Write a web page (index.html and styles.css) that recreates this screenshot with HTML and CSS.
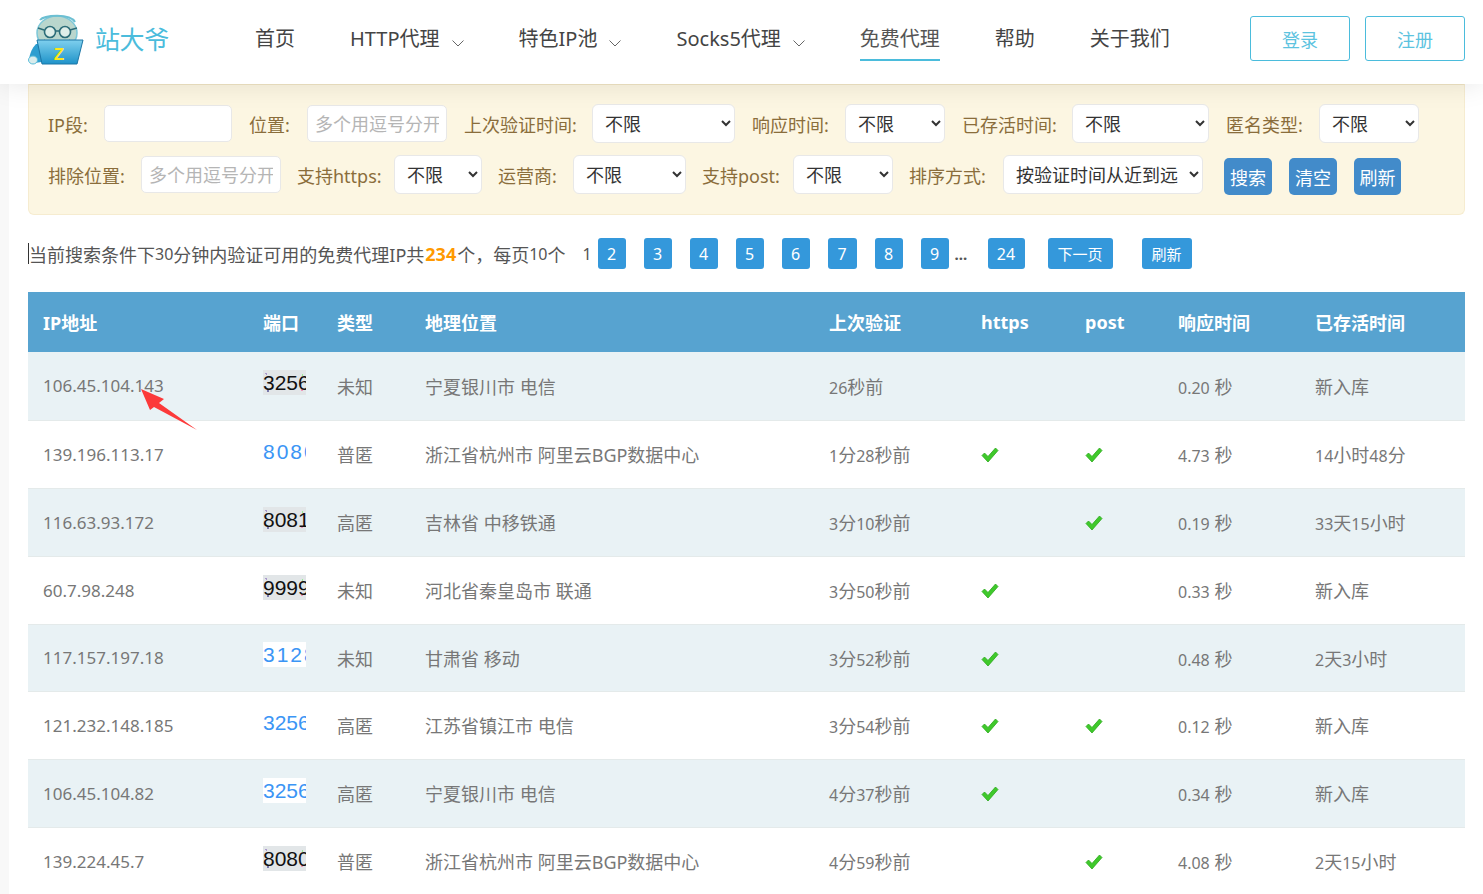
FILE: index.html
```html
<!DOCTYPE html>
<html lang="zh-CN">
<head>
<meta charset="utf-8">
<title>站大爷 免费代理</title>
<link rel="stylesheet" href="styles.css">
</head>
<body>
<header class="header">
  <a class="logo">
    <svg class="logo-mark" width="56" height="52" viewBox="0 0 56 52">
      <defs>
        <linearGradient id="lap" x1="0" y1="0" x2="0" y2="1"><stop offset="0" stop-color="#7fd0ee"/><stop offset="1" stop-color="#1f93c9"/></linearGradient>
      </defs>
      <path d="M8 31c-4 4-6 9-7 15l5 4 8-1 6-18z" fill="#2d9ed0"/>
      <ellipse cx="5" cy="47" rx="4.500" ry="4" fill="#d9ecec" stroke="#58bcd9" stroke-width="1"/>
      <ellipse cx="29" cy="20" rx="20" ry="17" fill="#b9d6cd" stroke="#7cc7d8" stroke-width="1.500"/>
      <path d="M12 7c4-5 30-7 35 2" fill="none" stroke="#6cbfd2" stroke-width="2"/>
      <circle cx="22" cy="19" r="5.500" fill="#dfeee9" stroke="#2c6c78" stroke-width="1.600"/>
      <circle cx="37" cy="19" r="5.500" fill="#dfeee9" stroke="#2c6c78" stroke-width="1.600"/>
      <path d="M27 18h5M16 17l-6-2M42 17l7-2" stroke="#2c6c78" stroke-width="1.400" fill="none"/>
      <path d="M16 27c5 7 20 7 26 0" fill="#fff" stroke="#2c6c78" stroke-width="1.400"/>
      <path d="M9 27h46l-6 24H14z" fill="url(#lap)" stroke="#1c76a6" stroke-width="1"/>
      <text class="logo-z" x="31" y="47" text-anchor="middle">Z</text>
    </svg>
    <span class="logo-text">站大爷</span>
  </a>
  <nav class="nav">
    <a class="nav-item">首页</a>
    <a class="nav-item">HTTP代理<svg class="caret" width="12" height="7" viewBox="0 0 12 7"><path d="M.5.500 6 6l5.500-5.500" fill="none" stroke="#666" stroke-width="1"/></svg></a>
    <a class="nav-item">特色IP池<svg class="caret" width="12" height="7" viewBox="0 0 12 7"><path d="M.5.500 6 6l5.500-5.500" fill="none" stroke="#666" stroke-width="1"/></svg></a>
    <a class="nav-item">Socks5代理<svg class="caret" width="12" height="7" viewBox="0 0 12 7"><path d="M.5.500 6 6l5.500-5.500" fill="none" stroke="#666" stroke-width="1"/></svg></a>
    <a class="nav-item active">免费代理</a>
    <a class="nav-item">帮助</a>
    <a class="nav-item">关于我们</a>
  </nav>
  <div class="auth">
    <a class="auth-btn">登录</a>
    <a class="auth-btn">注册</a>
  </div>
</header>

<main class="main">
  <section class="filter">
    <div class="row row-a">
      <label class="group"><span class="lb w56">IP段:</span><input class="ipt w128" type="text"></label>
      <label class="group"><span class="lb w58">位置:</span><input class="ipt w140" type="text" placeholder="多个用逗号分开"></label>
      <label class="group"><span class="lb w128">上次验证时间:</span><select class="sel w143"><option>不限</option></select></label>
      <label class="group"><span class="lb w93">响应时间:</span><select class="sel w100"><option>不限</option></select></label>
      <label class="group"><span class="lb w110">已存活时间:</span><select class="sel w137"><option>不限</option></select></label>
      <label class="group"><span class="lb w93">匿名类型:</span><select class="sel w100"><option>不限</option></select></label>
    </div>
    <div class="row row-b">
      <label class="group"><span class="lb w93">排除位置:</span><input class="ipt w140" type="text" placeholder="多个用逗号分开"></label>
      <label class="group"><span class="lb w97">支持https:</span><select class="sel w88"><option>不限</option></select></label>
      <label class="group"><span class="lb w75">运营商:</span><select class="sel w113"><option>不限</option></select></label>
      <label class="group"><span class="lb w91">支持post:</span><select class="sel w100"><option>不限</option></select></label>
      <label class="group"><span class="lb w94">排序方式:</span><select class="sel w200"><option>按验证时间从近到远</option></select></label>
      <div class="actions">
        <button class="act">搜索</button>
        <button class="act">清空</button>
        <button class="act narrow">刷新</button>
      </div>
    </div>
  </section>

  <div class="pager">
    <span class="summary">当前搜索条件下<span class="n">30</span>分钟内验证可用的免费代理IP共<b class="count">234</b>个，每页<span class="n">10</span>个</span>
    <span class="cur">1</span>
    <a class="pg">2</a><a class="pg">3</a><a class="pg">4</a><a class="pg">5</a><a class="pg">6</a><a class="pg wide">7</a><a class="pg">8</a><a class="pg">9</a>
    <span class="dots">...</span>
    <a class="pg w37">24</a>
    <a class="pg next">下一页</a>
    <a class="pg refresh">刷新</a>
  </div>

  <div class="table-wrap">
    <table class="tbl">
      <thead>
        <tr>
          <th class="c-ip">IP地址</th><th class="c-port">端口</th><th class="c-type">类型</th><th class="c-geo">地理位置</th><th class="c-last">上次验证</th><th class="c-https">https</th><th class="c-post">post</th><th class="c-resp">响应时间</th><th>已存活时间</th>
        </tr>
      </thead>
      <tbody>
        <tr><td class="ip">106.45.104.143</td><td><span class="cap dark">3256</span></td><td>未知</td><td>宁夏银川市 电信</td><td><span class="n">26</span>秒前</td><td></td><td></td><td><span class="n">0.20</span> 秒</td><td>新入库</td></tr>
        <tr><td class="ip">139.196.113.17</td><td><span class="cap blue plain spaced">8080</span></td><td>普匿</td><td>浙江省杭州市 阿里云BGP数据中心</td><td><span class="n">1</span>分<span class="n">28</span>秒前</td><td><svg class="ok" viewBox="0 0 18 16"><path d="M1 8.500 3.500 6 7 9.500 14.500 1 17 3.500 7 15z" fill="#3fc92b" stroke="#2ba81c" stroke-width=".8"/></svg></td><td><svg class="ok" viewBox="0 0 18 16"><path d="M1 8.500 3.500 6 7 9.500 14.500 1 17 3.500 7 15z" fill="#3fc92b" stroke="#2ba81c" stroke-width=".8"/></svg></td><td><span class="n">4.73</span> 秒</td><td><span class="n">14</span>小时<span class="n">48</span>分</td></tr>
        <tr><td class="ip">116.63.93.172</td><td><span class="cap dark">8081</span></td><td>高匿</td><td>吉林省 中移铁通</td><td><span class="n">3</span>分<span class="n">10</span>秒前</td><td></td><td><svg class="ok" viewBox="0 0 18 16"><path d="M1 8.500 3.500 6 7 9.500 14.500 1 17 3.500 7 15z" fill="#3fc92b" stroke="#2ba81c" stroke-width=".8"/></svg></td><td><span class="n">0.19</span> 秒</td><td><span class="n">33</span>天<span class="n">15</span>小时</td></tr>
        <tr><td class="ip">60.7.98.248</td><td><span class="cap dark">9999</span></td><td>未知</td><td>河北省秦皇岛市 联通</td><td><span class="n">3</span>分<span class="n">50</span>秒前</td><td><svg class="ok" viewBox="0 0 18 16"><path d="M1 8.500 3.500 6 7 9.500 14.500 1 17 3.500 7 15z" fill="#3fc92b" stroke="#2ba81c" stroke-width=".8"/></svg></td><td></td><td><span class="n">0.33</span> 秒</td><td>新入库</td></tr>
        <tr class="short"><td class="ip">117.157.197.18</td><td><span class="cap blue spaced">3128</span></td><td>未知</td><td>甘肃省 移动</td><td><span class="n">3</span>分<span class="n">52</span>秒前</td><td><svg class="ok" viewBox="0 0 18 16"><path d="M1 8.500 3.500 6 7 9.500 14.500 1 17 3.500 7 15z" fill="#3fc92b" stroke="#2ba81c" stroke-width=".8"/></svg></td><td></td><td><span class="n">0.48</span> 秒</td><td><span class="n">2</span>天<span class="n">3</span>小时</td></tr>
        <tr><td class="ip">121.232.148.185</td><td><span class="cap blue plain">3256</span></td><td>高匿</td><td>江苏省镇江市 电信</td><td><span class="n">3</span>分<span class="n">54</span>秒前</td><td><svg class="ok" viewBox="0 0 18 16"><path d="M1 8.500 3.500 6 7 9.500 14.500 1 17 3.500 7 15z" fill="#3fc92b" stroke="#2ba81c" stroke-width=".8"/></svg></td><td><svg class="ok" viewBox="0 0 18 16"><path d="M1 8.500 3.500 6 7 9.500 14.500 1 17 3.500 7 15z" fill="#3fc92b" stroke="#2ba81c" stroke-width=".8"/></svg></td><td><span class="n">0.12</span> 秒</td><td>新入库</td></tr>
        <tr><td class="ip">106.45.104.82</td><td><span class="cap blue">3256</span></td><td>高匿</td><td>宁夏银川市 电信</td><td><span class="n">4</span>分<span class="n">37</span>秒前</td><td><svg class="ok" viewBox="0 0 18 16"><path d="M1 8.500 3.500 6 7 9.500 14.500 1 17 3.500 7 15z" fill="#3fc92b" stroke="#2ba81c" stroke-width=".8"/></svg></td><td></td><td><span class="n">0.34</span> 秒</td><td>新入库</td></tr>
        <tr><td class="ip">139.224.45.7</td><td><span class="cap dark">8080</span></td><td>普匿</td><td>浙江省杭州市 阿里云BGP数据中心</td><td><span class="n">4</span>分<span class="n">59</span>秒前</td><td></td><td><svg class="ok" viewBox="0 0 18 16"><path d="M1 8.500 3.500 6 7 9.500 14.500 1 17 3.500 7 15z" fill="#3fc92b" stroke="#2ba81c" stroke-width=".8"/></svg></td><td><span class="n">4.08</span> 秒</td><td><span class="n">2</span>天<span class="n">15</span>小时</td></tr>
      </tbody>
    </table>
  </div>
  <svg class="pointer" width="60" height="46" viewBox="0 0 60 46"><path d="M1 1 24 11 19 15 57 42 14 19 10 22z" fill="#fc3a3a"/></svg>
</main>
</body>
</html>
```
FILE: styles.css
```css
* { box-sizing: border-box; }
html, body { margin: 0; height: 894px; overflow: hidden; }
body {
  background: #f8f8f8;
  font-family: "Noto Sans", "Noto Sans CJK SC", sans-serif;
  font-size: 18px;
  color: #777;
}

/* header */
.header {
  position: relative;
  z-index: 2;
  display: flex;
  align-items: flex-start;
  height: 84px;
  padding: 0 18px 0 28px;
  background: #fff;
  box-shadow: 0 0 26px rgba(0, 0, 0, .1);
}
.logo { display: flex; align-items: center; width: 227px; height: 78px; flex: none; }
.logo-mark { flex: none; margin-top: 0; }
.logo-z { font: 700 17px "Liberation Sans", sans-serif; fill: #ffe81a; }
.logo-text { margin-left: 11px; font-size: 25px; line-height: 30px; letter-spacing: -.4px; color: #4bbcdc; }
.nav { display: flex; gap: 55px; margin-top: 25px; }
.nav-item {
  display: flex;
  align-items: center;
  height: 36px;
  padding-bottom: 6px;
  border-bottom: 2px solid transparent;
  font-size: 20px;
  line-height: 28px;
  color: #444;
  white-space: nowrap;
}
.nav-item.active { border-bottom-color: #4bbcdc; color: #555; }
.caret { margin: 8px 0 0 12px; }
.auth { display: flex; gap: 15px; margin: 16px 0 0 auto; }
.auth-btn {
  display: flex;
  align-items: center;
  justify-content: center;
  width: 100px;
  height: 45px;
  border: 1px solid #4bbcdc;
  border-radius: 3px;
  color: #5cc3df;
  font-size: 18px;
}

/* main */
.main {
  position: relative;
  height: 810px;
  margin-left: 9px;
  padding: 0 18px 0 19px;
  background: #fff;
}
.filter {
  height: 131px;
  padding: 19px 19px 0;
  background: #fcf6e2;
  border: 1px solid #f6ecd0;
  border-top-color: #f0e4c4;
  border-radius: 0 0 6px 6px;
  color: #8a6d3b;
}
.row { display: flex; align-items: flex-start; }
.row-a { gap: 17px; margin-left: 0; }
.row-b { gap: 16px; margin-top: 12px; }
.group { display: flex; align-items: center; height: 39px; }
.lb { flex: none; font-size: 18px; white-space: nowrap; }
.ipt {
  flex: none;
  height: 37px;
  padding: 0 7px;
  border: 1px solid #e8e8e8;
  border-radius: 5px;
  background: #fff;
  font: 18px "Noto Sans", "Noto Sans CJK SC", sans-serif;
  outline: none;
}
.ipt::placeholder { color: #b5b5b5; }
.sel {
  flex: none;
  height: 39px;
  padding: 0 8px;
  border: 1px solid #e8e8e8;
  border-radius: 6px;
  background-color: #fff;
  color: #333;
  font: 18px "Noto Sans", "Noto Sans CJK SC", sans-serif;
}
.w56 { width: 56px; } .w58 { width: 58px; } .w75 { width: 75px; } .w88 { width: 88px; }
.w91 { width: 91px; } .w93 { width: 93px; } .w94 { width: 94px; } .w97 { width: 97px; }
.w100 { width: 100px; } .w110 { width: 110px; } .w113 { width: 113px; } .w128 { width: 128px; }
.w137 { width: 137px; } .w140 { width: 140px; } .w143 { width: 143px; } .w200 { width: 200px; }
.actions { display: flex; gap: 17px; margin: 3px 0 0 5px; }
.act {
  width: 48px;
  height: 37px;
  padding: 0;
  border: 0;
  border-radius: 5px;
  background: #428bca;
  color: #fff;
  font: 18px "Noto Sans", "Noto Sans CJK SC", sans-serif;
}
.act.narrow { width: 47px; }

/* pagination */
.pager {
  display: flex;
  align-items: center;
  height: 31px;
  margin-top: 23px;
  color: #555;
}
.summary { height: 21px; display: flex; align-items: center; border-left: 1px solid #333; white-space: nowrap; font-size: 18px; }
.count { margin: 0 1px; color: #f90; font-weight: 700; }
.n { font-size: 16px; }
.cur { margin-left: 17px; font-size: 16px; width: 15px; }
.pg {
  display: flex;
  align-items: center;
  justify-content: center;
  width: 28px;
  height: 31px;
  margin-right: 18px;
  border-radius: 3px;
  background: #3498db;
  color: #fff;
  font-size: 16px;
}
.pg.wide { width: 29px; }
.pg:nth-of-type(8) { margin-right: 6px; }
.dots { width: 33px; font-weight: 700; font-size: 15px; }
.pg.w37 { width: 37px; margin-right: 23px; }
.pg.next { width: 65px; margin-right: 29px; font-size: 15px; }
.pg.refresh { width: 50px; margin-right: 0; font-size: 15px; }

/* table */
.table-wrap { margin-top: 23px; }
.tbl { width: 1437px; border-collapse: collapse; table-layout: fixed; }
.tbl th {
  height: 60px;
  padding: 0 0 0 15px;
  background: #57a3d0;
  color: #fff;
  font-weight: 700;
  font-size: 18px;
  text-align: left;
}
.c-ip { width: 220px; } .c-port { width: 74px; } .c-type { width: 88px; } .c-geo { width: 404px; }
.c-last { width: 152px; } .c-https { width: 104px; } .c-post { width: 93px; } .c-resp { width: 137px; }
.tbl td {
  height: 68px;
  padding: 0 0 0 15px;
  border-bottom: 1px solid #e4eaea;
  white-space: nowrap;
  color: #777;
  font-size: 18px;
}
.tbl tr.short td { height: 67px; }
.tbl tbody tr:nth-child(odd) td { background: #e9f2f5; }
.tbl td.ip { font-size: 17px; }
.cap {
  display: block;
  width: 43px;
  height: 25px;
  margin-top: -6px;
  overflow: hidden;
  font: 21px/25px "Liberation Sans Narrow", "Liberation Sans", sans-serif;
  text-align: center;
}
.cap.dark {
  color: #111;
  background-color: #e2e6e8;
  background-image:
    radial-gradient(circle at 8% 15%, #a9c 0 1px, transparent 1px),
    radial-gradient(circle at 92% 20%, #9e9 0 1px, transparent 1px),
    radial-gradient(circle at 90% 80%, #e9b 0 1px, transparent 1px),
    radial-gradient(circle at 12% 85%, #77a 0 1px, transparent 1px);
}
.cap.blue { color: #3b95f5; background: #fff; }
.cap.plain { background: transparent; }
.cap.spaced { letter-spacing: 2px; }
.ok { display: block; width: 18px; height: 16px; margin-top: 2px; }

.pointer { position: absolute; left: 131px; top: 304px; }
```
